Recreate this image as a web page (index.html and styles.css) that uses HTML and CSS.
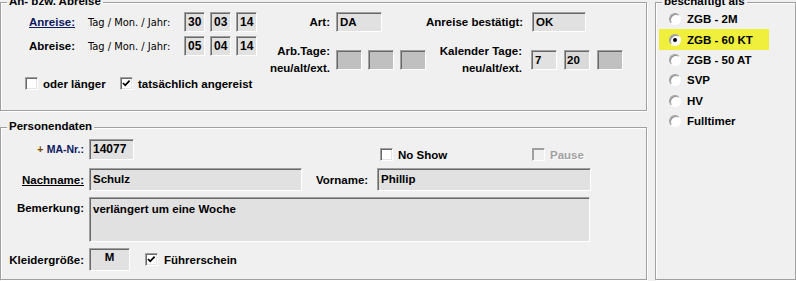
FILE: index.html
```html
<!DOCTYPE html>
<html>
<head>
<meta charset="utf-8">
<title>Aufenthalt</title>
<link rel="stylesheet" href="styles.css">
</head>
<body>
<div class="dialog">
	<div class="left">
		<div class="group group-reise">
			<span class="caption">An- bzw. Abreise</span>
			<div class="reise-fields">
				<div class="dates">
					<span class="lbl u navy">Anreise:</span>
					<span class="hint">Tag / Mon. / Jahr:</span>
					<span class="field date">30</span>
					<span class="field date">03</span>
					<span class="field date">14</span>
					<span class="lbl">Abreise:</span>
					<span class="hint">Tag / Mon. / Jahr:</span>
					<span class="field date">05</span>
					<span class="field date">04</span>
					<span class="field date">14</span>
				</div>
				<div class="status">
					<span class="lbl">Art:</span>
					<span class="field w-art">DA</span>
					<span class="lbl far">Anreise bestätigt:</span>
					<span class="field w-ok">OK</span>
					<span class="lbl two">Arb.Tage:<br>neu/alt/ext.</span>
					<span class="boxes">
						<span class="field cell empty"></span>
						<span class="field cell empty"></span>
						<span class="field cell empty"></span>
					</span>
					<span class="lbl far two">Kalender Tage:<br>neu/alt/ext.</span>
					<span class="boxes wide">
						<span class="field cell">7</span>
						<span class="field cell mid">20</span>
						<span class="field cell empty"></span>
					</span>
				</div>
			</div>
			<div class="checks">
				<label class="check w-laenger"><span class="box"></span>oder länger</label>
				<label class="check"><span class="box"><svg width="11" height="11" viewBox="0 0 11 11"><polyline points="2,5 4.2,7.3 8.6,2.6" fill="none" stroke="#000" stroke-width="1.8"/></svg></span>tatsächlich angereist</label>
			</div>
		</div>

		<div class="group group-person">
			<span class="caption">Personendaten</span>
			<div class="person">
				<span class="lbl lbl-top"><span class="plus">+</span> <span class="navy small">MA-Nr.:</span></span>
				<div class="row row-top">
					<span class="field w-ma">14077</span>
					<label class="check w-show"><span class="box"></span>No Show</label>
					<label class="check off"><span class="box"></span>Pause</label>
				</div>

				<span class="lbl u">Nachname:</span>
				<div class="row">
					<span class="field w-name">Schulz</span>
					<span class="lbl-inline">Vorname:</span>
					<span class="field w-vorname">Phillip</span>
				</div>

				<span class="lbl lbl-memo">Bemerkung:</span>
				<div class="row">
					<span class="field memo">verlängert um eine Woche</span>
				</div>

				<span class="lbl">Kleidergröße:</span>
				<div class="row">
					<span class="field w-size">M</span>
					<label class="check w-fs"><span class="box"><svg width="11" height="11" viewBox="0 0 11 11"><polyline points="2,5 4.2,7.3 8.6,2.6" fill="none" stroke="#000" stroke-width="1.8"/></svg></span>Führerschein</label>
				</div>
			</div>
		</div>
	</div>

	<div class="group group-job">
		<span class="caption">beschäftigt als</span>
		<div class="radios">
			<label class="radio"><span class="dot"></span>ZGB - 2M</label>
			<label class="radio sel"><span class="dot on"></span>ZGB - 60 KT</label>
			<label class="radio"><span class="dot"></span>ZGB - 50 AT</label>
			<label class="radio"><span class="dot"></span>SVP</label>
			<label class="radio"><span class="dot"></span>HV</label>
			<label class="radio"><span class="dot"></span>Fulltimer</label>
		</div>
	</div>
</div>
</body>
</html>
```

FILE: styles.css
```css
*
{
	box-sizing:border-box;
	margin:0;
	padding:0;
}
body
{
	background:#f0f0f0;
	font:bold 11.5px "Liberation Sans", Arial, sans-serif;
	color:#000;
	width:796px;
	height:281px;
	overflow:hidden;
}
.dialog
{
	display:flex;
	align-items:flex-start;
}
.left
{
	width:647px;
}

/* group boxes */
.group
{
	position:relative;
	border:1px solid #a0a0a0;
	box-shadow:inset 1px 1px 0 #fff, 1px 1px 0 #fff;
}
.caption
{
	position:absolute;
	top:-8px;
	left:6px;
	padding:0 2px;
	line-height:13px;
	background:#f0f0f0;
	white-space:nowrap;
}
.group-reise
{
	margin-top:2px;
	height:109px;
}
.group-person
{
	margin-top:16px;
	height:153px;
}
.group-job
{
	margin:2px 0 0 8px;
	width:141px;
	height:278px;
}

/* labels */
.lbl
{
	white-space:nowrap;
}
.u
{
	text-decoration:underline;
}
.navy
{
	color:#0c1860;
}
.hint
{
	font:normal 11px "Liberation Sans Narrow", "DejaVu Sans Condensed", "Liberation Sans", sans-serif;
	font-stretch:condensed;
	white-space:nowrap;
}

/* sunken fields */
.field
{
	display:block;
	height:20px;
	background:#e1e1e1;
	border:1px solid;
	border-color:#a0a0a0 #fff #fff #a0a0a0;
	box-shadow:inset 1px 1px 0 #696969;
	padding:2px 0 0 3px;
	line-height:15px;
	white-space:nowrap;
	overflow:hidden;
}
.date
{
	width:21px;
	font-size:12px;
}
.cell
{
	width:26px;
}
.cell.mid
{
	background:#d9d9d9;
	padding-left:2px;
}
.empty
{
	background:#c0c0c0;
}
.w-art
{
	width:46px;
}
.w-ok
{
	width:54px;
	margin-left:1px;
}

/* top group */
.reise-fields
{
	display:flex;
	align-items:flex-start;
	padding-top:9px;
}
.dates
{
	display:grid;
	grid-template-columns:59px 96px 26px 26px 21px;
	grid-template-rows:20px 20px;
	row-gap:4px;
	align-items:center;
	margin-left:28px;
}
.status
{
	display:grid;
	grid-template-columns:79px 90px 105px auto;
	grid-template-rows:20px 34px;
	row-gap:11px;
	align-items:center;
}
.status .lbl
{
	text-align:right;
	padding-right:6px;
}
.status .lbl.far
{
	padding-right:9px;
}
.two
{
	line-height:17px;
}
.boxes
{
	display:flex;
	gap:6px;
}
.boxes.wide
{
	gap:7px;
}
.checks
{
	display:flex;
	align-items:center;
	height:13px;
	margin-left:24px;
}

/* checkboxes */
.check
{
	display:flex;
	align-items:center;
	gap:5px;
	white-space:nowrap;
}
.check .box
{
	display:block;
	width:13px;
	height:13px;
	background:#fff;
	border:1px solid;
	border-color:#a0a0a0 #fff #fff #a0a0a0;
	box-shadow:inset 1px 1px 0 #696969, inset -1px -1px 0 #e3e3e3;
}
.check .box svg
{
	display:block;
	margin:0;
}
.check.off
{
	color:#a0a0a0;
	text-shadow:1px 1px 0 #fff;
}
.check.off .box
{
	background:#f0f0f0;
	box-shadow:inset 1px 1px 0 #a0a0a0;
}
.w-laenger
{
	width:95px;
}

/* person group */
.person
{
	display:grid;
	grid-template-columns:88px 1fr;
	grid-template-rows:23px 23px 45px 23px;
	row-gap:6px;
	align-items:center;
	padding-top:11px;
}
.person > .lbl
{
	text-align:right;
	padding-right:5px;
}
.lbl-top
{
	align-self:start;
	line-height:21px;
}
.lbl-memo
{
	align-self:start;
	padding-top:4px;
	line-height:14px;
}
.plus
{
	color:#7a4a00;
	font-size:10.5px;
}
.small
{
	font-size:10.5px;
}
.row
{
	display:flex;
	align-items:center;
}
.row-top
{
	align-self:start;
	align-items:flex-start;
}
.row-top .check
{
	margin-top:9px;
}
.w-ma
{
	width:45px;
	height:21px;
	font-size:12px;
}
.w-show
{
	margin-left:246px;
	width:152px;
}
.w-name
{
	width:213px;
	height:23px;
	padding-top:3px;
}
.lbl-inline
{
	margin-left:14px;
	width:61px;
}
.w-vorname
{
	width:214px;
	height:23px;
	padding-top:3px;
}
.memo
{
	width:501px;
	height:45px;
	padding-top:4px;
	line-height:14px;
}
.w-size
{
	width:41px;
	height:23px;
	padding:1px 0 0;
	text-align:center;
}
.w-fs
{
	margin-left:15px;
	gap:6px;
}

/* radio list */
.radios
{
	padding:6px 0 0 3px;
}
.radio
{
	display:flex;
	align-items:center;
	gap:6px;
	width:110px;
	height:20.4px;
	padding-left:10px;
	white-space:nowrap;
}
.radio.sel
{
	background:#efef3c;
}
.dot
{
	position:relative;
	display:block;
	width:12px;
	height:12px;
	border-radius:50%;
	background:#fff;
	border:1px solid;
	border-color:#a0a0a0 #fff #fff #a0a0a0;
	box-shadow:inset 1px 1px 0 #909090;
}
.dot.on::after
{
	content:"";
	position:absolute;
	left:3px;
	top:3px;
	width:4px;
	height:4px;
	border-radius:50%;
	background:#000;
}
```
